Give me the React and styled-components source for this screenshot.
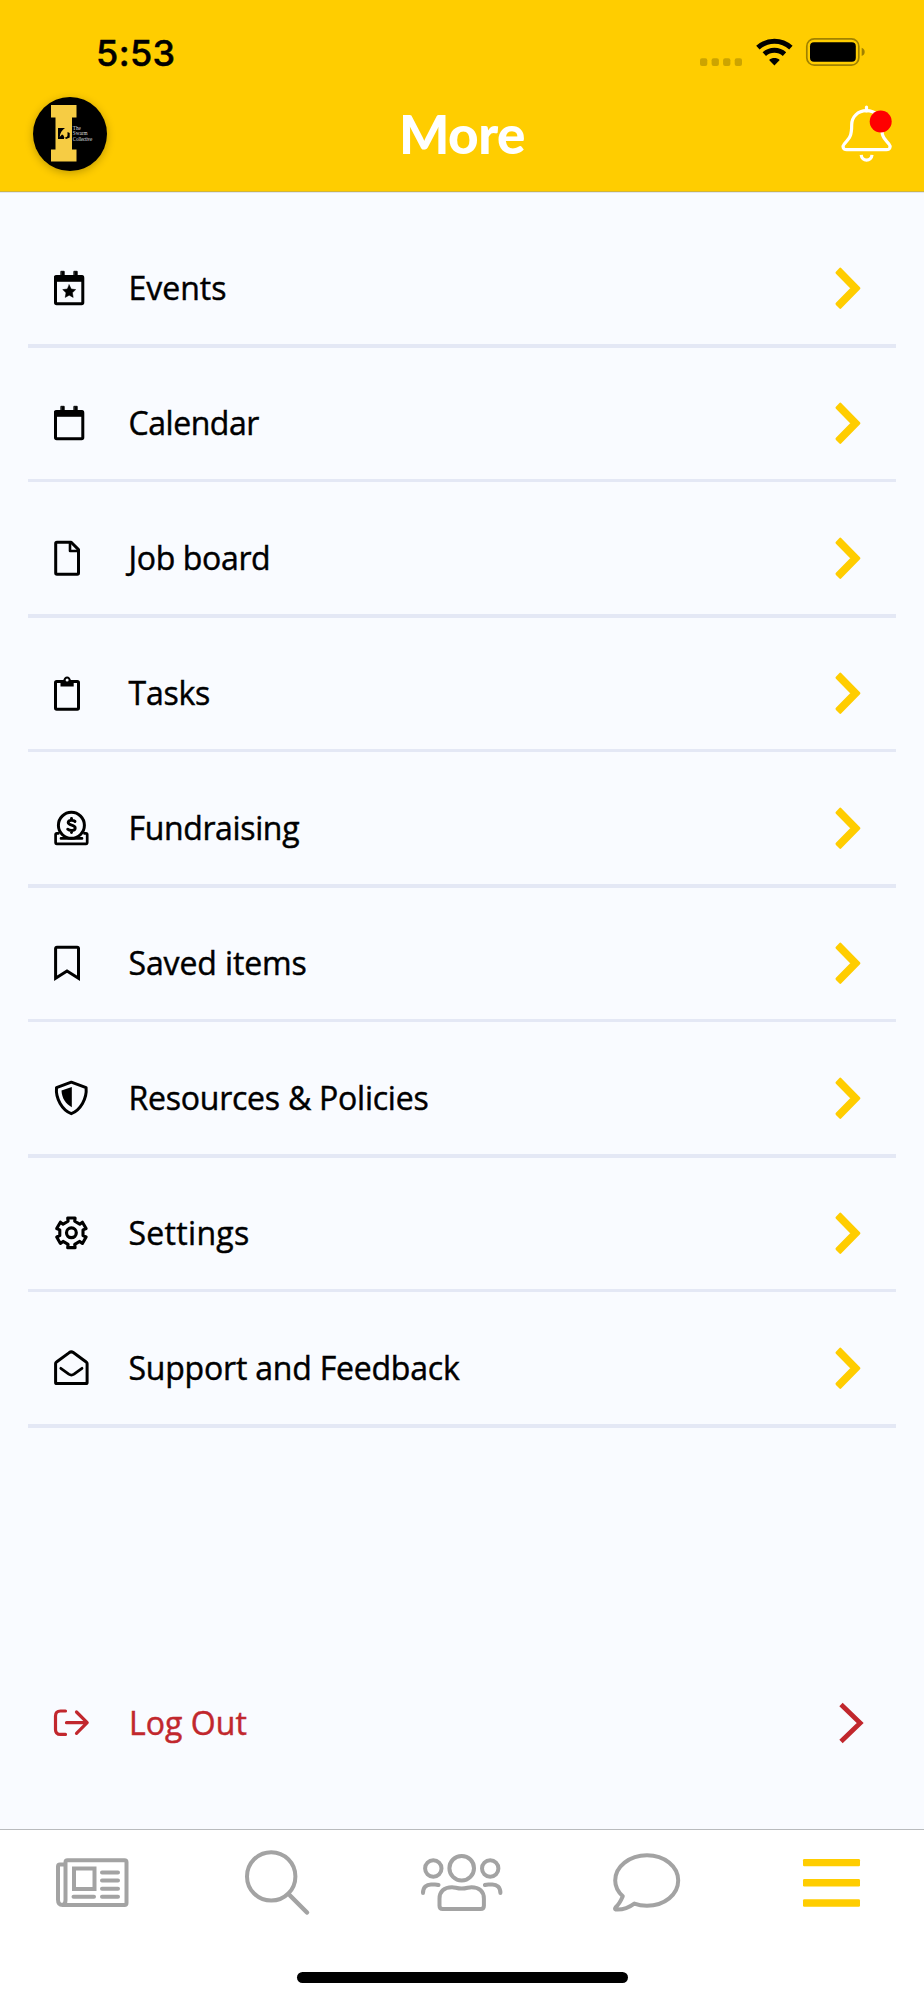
import React from 'react'
import styled, { createGlobalStyle } from 'styled-components'

const GlobalStyle = createGlobalStyle`
  * {
    box-sizing: border-box;
  }

  body {
    margin: 0;
    background: #f9fbff;
  }

  svg {
    display: block;
    flex: none;
    overflow: visible;
  }
`

const Screen = styled.div`
  width: 924px;
  height: 2000px;
  display: flex;
  flex-direction: column;
  overflow: hidden;
  background: #f9fbff;
  color: #000;
  font-family: 'Open Sans', sans-serif;
`

const Header = styled.header`
  height: 192px;
  background: #ffcd00;
  border-bottom: 1px solid #d2b53c;
  box-shadow: 0 1px 0 #dfe5f3;
`

const StatusBar = styled.div`
  height: 90px;
  padding: 14px 59px 0 96px;
  display: flex;
  align-items: center;
  justify-content: space-between;
`

const Time = styled.span`
  padding-top: 2px;
  font-family: Inter, sans-serif;
  font-size: 36px;
  font-weight: 500;
  line-height: 44px;
  letter-spacing: .4px;
  -webkit-text-stroke: .5px #000;
`

const StatusIcons = styled.div`
  display: flex;
  align-items: center;
  gap: 13px;
`

const TitleBar = styled.div`
  height: 88px;
  padding: 0 32px;
  display: grid;
  grid-template-columns: 75px 1fr 75px;
  align-items: center;
`

const Logo = styled.div`
  width: 74px;
  height: 74px;
  margin-left: .5px;
  border-radius: 50%;
  background: #000;
  box-shadow: 0 2px 8px rgba(0, 0, 0, .25);
`

const Title = styled.h1`
  margin: 0;
  color: #fff;
  font-family: Lato, 'Open Sans', sans-serif;
  font-size: 53px;
  font-weight: 900;
  line-height: 70px;
  letter-spacing: -.5px;
  text-align: center;
`

const BellButton = styled.button`
  width: 50px;
  height: 58px;
  padding: 0;
  border: 0;
  background: none;
  justify-self: end;
`

const Menu = styled.main`
  flex: 1;
  padding: 21px 28px 0;
`

const Item = styled.div`
  height: 135px;
  display: flex;
  flex-direction: column;
`

const Row = styled.a`
  height: 131px;
  padding: ${p => p.$danger ? '0 32px 0 26px' : '19px 35px 0 26px'};
  display: flex;
  align-items: center;
  color: ${p => p.$danger ? '#c1272d' : '#000'};
`

const Divider = styled.div`
  height: ${p => p.$thin ? 3 : 4}px;
  background: #e4e8f5;
`

const Label = styled.span`
  flex: 1;
  margin-left: ${p => p.$shift || 38.5}px;
  font-size: 32px;
  font-weight: 400;
  line-height: 44px;
  letter-spacing: ${p => p.$spacing || 0}px;
  white-space: nowrap;
  -webkit-text-stroke: .45px currentColor;
`

const LogoutSection = styled.div`
  margin-top: 229px;
`

const TabBar = styled.nav`
  height: 171px;
  background: #fff;
  border-top: 1px solid #b9bbbd;
`

const Tabs = styled.div`
  height: 106px;
  display: grid;
  grid-template-columns: repeat(5, 1fr);
  align-items: center;
  justify-items: center;
`

const HomeIndicator = styled.div`
  width: 331px;
  height: 11px;
  margin: 36px auto 0;
  border-radius: 6px;
  background: #000;
`

const Icon = ({ children }) => (
  <svg width="36" height="36" viewBox="0 0 36 36" fill="none" stroke="currentColor"
    strokeWidth="3" strokeLinejoin="round" strokeLinecap="round">
    {children}
  </svg>
)

const CalendarFrame = () => (
  <>
    <rect x="1.5" y="6.5" width="27.3" height="27.3" rx="1.2" />
    <path d="M1 6h28.3v5.3H1zM7.2 1.3h3v5h-3zM20.2 1.3h3v5h-3z" fill="currentColor" strokeWidth=".9" />
  </>
)

// six teeth, the first one pointing up
const gearPoints = Array.from({ length: 6 }, (_, i) => (
  [[-23, 11.7], [-16, 12], [-14, 15.3], [14, 15.3], [16, 12], [23, 11.7]].map(([offset, r]) => {
    const a = (i * 60 - 90 + offset) * Math.PI / 180
    return `${(17.4 + r * Math.cos(a)).toFixed(2)},${(17.8 + r * Math.sin(a)).toFixed(2)}`
  }).join(' ')
)).join(' ')

const icons = {
  events: (
    <Icon>
      <CalendarFrame />
      <path d="M15.2 14.8l2 4.2 4.5.6-3.3 3.2.8 4.6-4-2.2-4 2.2.8-4.6-3.3-3.2 4.5-.6z" fill="currentColor" strokeWidth=".5" />
    </Icon>
  ),
  calendar: <Icon><CalendarFrame /></Icon>,
  jobs: (
    <Icon>
      <path d="M3 2.3h14.2l7.3 7.3V33q0 1.2-1.2 1.2H3q-1.3 0-1.3-1.2V3.6Q1.7 2.3 3 2.3z" />
      <path d="M16 2.8v8.2h8.4" strokeWidth="2.6" />
    </Icon>
  ),
  tasks: (
    <Icon>
      <rect x="1.5" y="6.5" width="23" height="27.8" rx="1.2" />
      <path d="M6.5 6.2h2.7c.2-6.4 7.6-6.4 7.8 0h2.7v5.3H6.5z" fill="currentColor" stroke="none" />
      <circle cx="13.1" cy="5" r="1.5" fill="#f9fbff" stroke="none" />
    </Icon>
  ),
  fundraising: (
    <Icon>
      <circle cx="17.4" cy="15.3" r="13" />
      <path d="M4.3 23.4H2.8q-1.2 0-1.2 1.2v8q0 1.2 1.2 1.2h29.2q1.2 0 1.2-1.2v-8q0-1.2-1.2-1.2h-1.5M7 28.4h21" strokeWidth="2.7" />
      <path d="M21 11.4c-1.4-1.4-6.8-1.8-6.8 1.2 0 3.3 7 1.9 7 5.4 0 3.1-5.4 3-7.5 1.2M17.5 8.4v2M17.5 20.5v2" strokeWidth="2.9" />
    </Icon>
  ),
  saved: <Icon><path d="M1.6 33.3V3.6q0-1.4 1.4-1.4h20.1q1.4 0 1.4 1.4v29.7L13 26z" strokeLinejoin="miter" /></Icon>,
  resources: (
    <Icon>
      <path d="M17.3 2.2l14.8 5.5c1 11-5.7 22.5-14.8 26C8.2 30.2 1.5 18.7 2.5 7.7z" />
      <path d="M17.8 7v20.2C11.5 23.5 8 18.5 7.5 10.4z" fill="currentColor" stroke="none" />
    </Icon>
  ),
  settings: (
    <Icon>
      <polygon points={gearPoints} strokeWidth="3.1" />
      <circle cx="17.4" cy="17.8" r="4.9" strokeWidth="3.2" />
    </Icon>
  ),
  support: (
    <Icon>
      <path d="M1.6 13.6Q1.6 12.6 2.5 12L15.3 2.6q2-1.4 4 0L32.2 12q.9.6.9 1.6v18.8q0 1.2-1.2 1.2H2.8q-1.2 0-1.2-1.2z" />
      <path d="M6.8 18.3l8 5.9q2.6 1.8 5.2 0l8-5.9" strokeWidth="2.7" />
    </Icon>
  ),
  logout: (
    <Icon>
      <path d="M11.5 6H6.5q-5 0-5 5v13.4q0 5 5 5h5M12.5 17.7h20M22.5 7l10.700 10.7-10.7 10.7" strokeWidth="3.2" />
    </Icon>
  )
}

const Chevron = () => (
  <svg width="26" height="42" viewBox="0 0 26 42" fill="#ffcd00" stroke="#ffcd00" strokeWidth="3" strokeLinejoin="round">
    <path d="M5.3 2.2L23.9 21.3 5.3 40.3 2 36.9 17.2 21.3 2 5.7z" />
  </svg>
)

const ThinChevron = () => (
  <svg width="25" height="42" viewBox="0 0 25 42" fill="none" stroke="#c1272d" strokeWidth="4.8">
    <path d="M2 2.5L21.2 21 2 39.5" />
  </svg>
)

const LogoMark = () => (
  <svg width="74" height="74" viewBox="0 0 74 74">
    <path d="M18 8h25.5v12.5H39v32h4.5v12H18v-12h4.5v-32H18z" fill="#f6cc44" />
    <path d="M25 31h7c-3 2-5 5-5.3 9l2.3-2.5c1.5.5 2.5 2 2 4.5H25z" fill="#000" />
    <path d="M34.5 35l2.2 1v4.5l-3.5 1.5-2-1.5c2 0 3-.6 3.3-2z" fill="#000" />
    <g fill="#ddd" fontFamily="'Liberation Serif', serif" fontSize="5.2">
      <text x="39.8" y="32.8">The</text>
      <text x="39.8" y="38.2">Swarm</text>
      <text x="39.8" y="43.7" textLength="19.5">Collective</text>
    </g>
  </svg>
)

const Signal = () => (
  <svg width="43" height="28" viewBox="0 0 43 28" fill="#cca400">
    {[0, 11.6, 23.1, 34.7].map(x => <rect key={x} x={x} y="20.3" width="7.3" height="7.6" rx="2" />)}
  </svg>
)

const Wifi = () => (
  <svg width="37" height="28" viewBox="0 0 37 28" fill="none" stroke="#000" strokeWidth="5">
    <path d="M1.9 9.7c9.2-8.6 23.7-8.6 33 0M8.3 16.1c5.7-5.3 14.5-5.3 20.2 0" />
    <path d="M13.1 22c3-2.6 7.6-2.6 10.6 0l-5.3 5.4z" fill="#000" stroke="none" />
  </svg>
)

const Battery = () => (
  <svg width="59" height="28" viewBox="0 0 59 28">
    <rect x=".8" y=".8" width="52" height="26.4" rx="7.5" fill="none" stroke="#a08100" strokeWidth="1.7" />
    <rect x="4" y="4.3" width="45.8" height="19.5" rx="4" />
    <path d="M55.7 9.8c4 1.3 4 7 0 8.3z" fill="#a08100" />
  </svg>
)

const Bell = () => (
  <svg width="50" height="58" viewBox="0 0 50 58" fill="none" stroke="#fff" strokeWidth="3.2" strokeLinejoin="round">
    <path d="M24.5 2v4" strokeLinecap="round" />
    <path d="M24.5 5.7c9 0 15 6.3 15 14 0 11 1.8 13.3 7.3 19.1 2.4 2.8 1.3 5.9-2.3 5.9H4.7C1 44.7 0 41.6 2.4 38.8c5.5-5.8 7.3-8.1 7.3-19.1 0-7.7 6-14 14.8-14z" />
    <path d="M19.2 49.8c.6 7 10.2 7 10.8 0" />
    <circle cx="38.7" cy="16.5" r="11" fill="#f00" stroke="none" />
  </svg>
)

const TabIcon = ({ width = 82, color = '#a3a3a3', children }) => (
  <svg width={width} height="66" viewBox={`0 0 ${width} 66`} fill="none" stroke={color}
    strokeWidth="4" strokeLinejoin="round" strokeLinecap="round">
    {children}
  </svg>
)

const NewsIcon = () => (
  <TabIcon width={73}>
    <path d="M9 14.5H4Q2 14.5 2 16.5v33q0 5.5 4.5 5.5h62q2 0 2-2V12.3q0-2-2-2h-57q-2 0-2 2v37.7q0 4.5-3 5" />
    <rect x="18" y="18.5" width="20.5" height="20.5" strokeLinejoin="miter" />
    <path d="M46 22.5h16M46 30.6h16M46 38.7h16M46 46.8h16M17.5 46.8h20.5" />
  </TabIcon>
)

const SearchIcon = () => (
  <TabIcon width={65}>
    <circle cx="26.2" cy="26.4" r="24.2" />
    <path d="M45 45.5l17 17" strokeWidth="4.5" />
  </TabIcon>
)

const GroupIcon = () => (
  <TabIcon width={81}>
    <circle cx="12.3" cy="18.5" r="8.2" />
    <circle cx="69.2" cy="18.5" r="8.2" />
    <circle cx="40.7" cy="18.2" r="12.3" />
    <path d="M2 43c0-6 3.5-8.5 8-8.5h4q2 0 3.5.5M79.4 43c0-6-3.5-8.5-8-8.5h-4q-2 0-3.5.5" />
    <path d="M31 37.2c-8 0-12.5 4.5-12.5 11.5v7q0 3.3 3.3 3.3h37.8q3.3 0 3.3-3.3v-7c0-7-4.5-11.5-12.5-11.5-3 0-5 1.4-9.7 1.4S34 37.2 31 37.2z" />
  </TabIcon>
)

const ChatIcon = () => (
  <TabIcon width={68}>
    <path d="M34 5.200c17.500 0 31.200 11.300 31.200 25.300S51.500 55.800 34 55.800c-4.500 0-8.800-.7-12.700-2.200C16.500 57.200 10.500 60 2.800 59.500q-1.500-.4-.2-2.200c3-2.500 5.300-6.500 7.200-11C5 41.900 2.200 36.500 2.200 30.500 2.200 16.500 16.500 5.200 34 5.200z" />
  </TabIcon>
)

const MenuIcon = () => (
  <TabIcon width={57} color="#ffcd00">
    {[8.9, 29.1, 49.3].map(y => (
      <rect key={y} x="0" y={y} width="57" height="7.4" rx="1.3" fill="#ffcd00" stroke="none" />
    ))}
  </TabIcon>
)

const items = [
  { icon: 'events', label: 'Events', spacing: 0 },
  { icon: 'calendar', label: 'Calendar', spacing: -0.45 },
  { icon: 'jobs', label: 'Job board', spacing: -0.35 },
  { icon: 'tasks', label: 'Tasks', spacing: -0.25 },
  { icon: 'fundraising', label: 'Fundraising', spacing: -0.36 },
  { icon: 'saved', label: 'Saved items', spacing: -0.12 },
  { icon: 'resources', label: 'Resources & Policies', spacing: -0.24 },
  { icon: 'settings', label: 'Settings', spacing: 0.3 },
  { icon: 'support', label: 'Support and Feedback', spacing: -0.21 }
]

export default function App () {
  return (
    <Screen>
      <GlobalStyle />
      <Header>
        <StatusBar>
          <Time>5:53</Time>
          <StatusIcons>
            <Signal />
            <Wifi />
            <Battery />
          </StatusIcons>
        </StatusBar>
        <TitleBar>
          <Logo><LogoMark /></Logo>
          <Title>More</Title>
          <BellButton aria-label="Notifications"><Bell /></BellButton>
        </TitleBar>
      </Header>
      <Menu>
        {items.map((item, i) => (
          <Item key={item.icon}>
            <Row>
              {icons[item.icon]}
              <Label $spacing={item.spacing}>{item.label}</Label>
              <Chevron />
            </Row>
            <Divider $thin={i % 2 === 1} />
          </Item>
        ))}
        <LogoutSection>
          <Row $danger>
            {icons.logout}
            <Label $spacing={0.05} $shift={39}>Log Out</Label>
            <ThinChevron />
          </Row>
        </LogoutSection>
      </Menu>
      <TabBar>
        <Tabs>
          <NewsIcon />
          <SearchIcon />
          <GroupIcon />
          <ChatIcon />
          <MenuIcon />
        </Tabs>
        <HomeIndicator />
      </TabBar>
    </Screen>
  )
}
